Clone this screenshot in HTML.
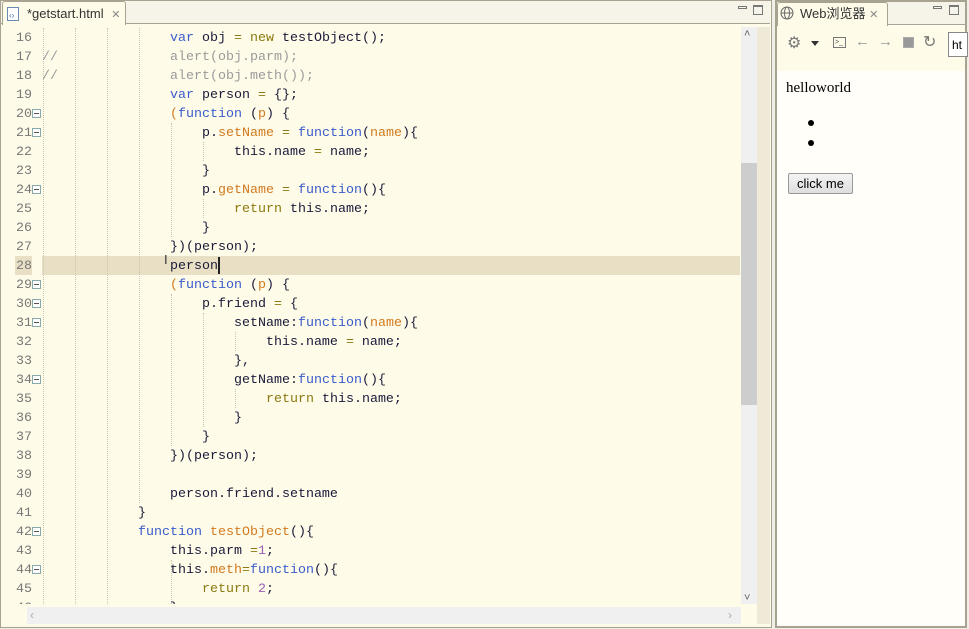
<!DOCTYPE html>
<html><head><meta charset="utf-8"><style>
*{margin:0;padding:0;box-sizing:border-box}
body{width:969px;height:629px;background:#f0efe6;position:relative;overflow:hidden;font-family:"Liberation Sans","Noto Sans CJK SC",sans-serif}
.abs{position:absolute}
#ed{left:0;top:0;width:772px;height:628px;border:1px solid #a8a390;background:#fefbe8}
#tabbar{left:1px;top:1px;width:769px;height:23px;background:#f6f4e8;border-bottom:1px solid #a8a390}
.tab{height:24px;background:#fefbe8;border:1px solid #a8a390;border-bottom:none;border-radius:3px 3px 0 0;font-size:13px;line-height:16px;color:#333;padding:4px 0 0 24px;white-space:nowrap}
.code{font-family:"Liberation Mono",monospace;font-size:13.33px;line-height:19px;white-space:pre;color:#1a1a3a}
.ln{color:#787878;font-family:"Liberation Mono",monospace;font-size:13.33px;line-height:19px;width:32px;text-align:right;left:0}
.k{color:#3a5ccc}.o{color:#8c7a10}.p{color:#d27a1e}.c{color:#9a9a9a}.n{color:#9c5fb5}
.fold{width:9px;height:9px;border:1px solid #8aa;background:#fff;}
.fold:after{content:"";position:absolute;left:1px;top:3px;width:5px;height:1px;background:#555}
.g{border-left:1px dotted #c8c4b0;width:0}
#br{left:775px;top:0;width:192px;height:628px;border:2px solid #a8a390;background:#fffef9}
</style></head><body>
<div id="ed" class="abs"></div>
<div id="tabbar" class="abs"></div>
<div class="abs tab" style="left:2px;top:1px;width:124px">*getstart.html <span style="color:#888;font-size:11px;margin-left:4px">✕</span></div>
<svg class="abs" style="left:7px;top:7px" width="13" height="14"><rect x="0.5" y="0.5" width="11" height="13" fill="#fff" stroke="#6a8ab0"/><text x="2" y="11" font-size="8" fill="#3a6aa0" font-family="Liberation Sans">‹›</text></svg>
<div class="abs" style="left:738px;top:6px;width:9px;height:3px;border:1px solid #777"></div>
<div class="abs" style="left:753px;top:5px;width:10px;height:10px;border:1px solid #777;border-top-width:2px"></div>

<div class="abs" style="left:42px;top:256px;width:698px;height:19px;background:#e8dfc4"></div>
<div class="abs" style="left:15px;top:256px;width:17px;height:19px;background:#e8dfc4"></div>

<div class="abs g" style="left:43px;top:28px;height:576px"></div>
<div class="abs g" style="left:75px;top:28px;height:576px"></div>
<div class="abs g" style="left:107px;top:28px;height:576px"></div>
<div class="abs g" style="left:139px;top:28px;height:475px"></div>
<div class="abs g" style="left:171px;top:123px;height:114px"></div>
<div class="abs g" style="left:171px;top:294px;height:152px"></div>
<div class="abs g" style="left:203px;top:142px;height:19px"></div>
<div class="abs g" style="left:203px;top:199px;height:19px"></div>
<div class="abs g" style="left:203px;top:313px;height:114px"></div>
<div class="abs g" style="left:235px;top:332px;height:19px"></div>
<div class="abs g" style="left:235px;top:389px;height:19px"></div>
<div class="abs g" style="left:171px;top:560px;height:44px"></div>

<div class="abs ln" style="top:29px;height:575px;overflow:hidden">16
17
18
19
20
21
22
23
24
25
26
27
28
29
30
31
32
33
34
35
36
37
38
39
40
41
42
43
44
45
46</div>
<div class="abs fold" style="left:32px;top:109px"></div>
<div class="abs fold" style="left:32px;top:128px"></div>
<div class="abs fold" style="left:32px;top:185px"></div>
<div class="abs fold" style="left:32px;top:280px"></div>
<div class="abs fold" style="left:32px;top:299px"></div>
<div class="abs fold" style="left:32px;top:318px"></div>
<div class="abs fold" style="left:32px;top:375px"></div>
<div class="abs fold" style="left:32px;top:527px"></div>
<div class="abs fold" style="left:32px;top:565px"></div>

<div class="abs code" style="left:42px;top:29px;width:698px;height:575px;overflow:hidden">                <span class="k">var</span> obj <span class="o">=</span> <span class="o">new</span> testObject();
<span class="c">//              alert(obj.parm);</span>
<span class="c">//              alert(obj.meth());</span>
                <span class="k">var</span> person <span class="o">=</span> {};
                <span class="p">(</span><span class="k">function</span> (<span class="p">p</span>) {
                    p.<span class="p">setName</span> <span class="o">=</span> <span class="k">function</span>(<span class="p">name</span>){
                        this.name <span class="o">=</span> name;
                    }
                    p.<span class="p">getName</span> <span class="o">=</span> <span class="k">function</span>(){
                        <span class="o">return</span> this.name;
                    }
                })(person);
                person
                <span class="p">(</span><span class="k">function</span> (<span class="p">p</span>) {
                    p.friend <span class="o">=</span> {
                        setName:<span class="k">function</span>(<span class="p">name</span>){
                            this.name <span class="o">=</span> name;
                        },
                        getName:<span class="k">function</span>(){
                            <span class="o">return</span> this.name;
                        }
                    }
                })(person);

                person.friend.setname
            }
            <span class="k">function</span> <span class="p">testObject</span>(){
                this.parm <span class="o">=</span><span class="n">1</span>;
                this.<span class="p">meth</span><span class="o">=</span><span class="k">function</span>(){
                    <span class="o">return</span> <span class="n">2</span>;
                }</div>
<div class="abs" style="left:218px;top:257px;width:2px;height:17px;background:#222"></div>
<div class="abs" style="left:164px;top:252px;font-size:13px;color:#333">I</div>

<div class="abs" style="left:741px;top:27px;width:16px;height:577px;background:#f0f0f0"></div>
<div class="abs" style="left:741px;top:163px;width:16px;height:242px;background:#cdcdcd"></div>
<div class="abs" style="left:744px;top:28px;font-size:11px;color:#666">˄</div>
<div class="abs" style="left:744px;top:592px;font-size:11px;color:#666">˅</div>
<div class="abs" style="left:757px;top:27px;width:13px;height:597px;background:#efe9d8"></div>
<div class="abs" style="left:27px;top:607px;width:714px;height:17px;background:#f0f0f0"></div>
<div class="abs" style="left:30px;top:608px;font-size:12px;color:#aaa">‹</div>
<div class="abs" style="left:728px;top:608px;font-size:12px;color:#aaa">›</div>

<div id="br" class="abs"></div>
<div class="abs" style="left:777px;top:2px;width:188px;height:23px;background:#f6f4e8;border-bottom:1px solid #a8a390"></div>
<div class="abs tab" style="left:777px;top:2px;width:111px;padding-left:22px;padding-top:3px">Web浏览器 <span style="color:#888;font-size:11px">✕</span></div>
<svg class="abs" style="left:780px;top:6px" width="14" height="14"><circle cx="7" cy="7" r="6" fill="none" stroke="#666"/><ellipse cx="7" cy="7" rx="2.5" ry="6" fill="none" stroke="#666"/><line x1="1" y1="7" x2="13" y2="7" stroke="#666"/></svg>
<div class="abs" style="left:933px;top:6px;width:9px;height:3px;border:1px solid #777"></div>
<div class="abs" style="left:949px;top:5px;width:10px;height:10px;border:1px solid #777;border-top-width:2px"></div>
<div class="abs" style="left:777px;top:26px;width:188px;height:45px;background:#fefbe8"></div>
<div class="abs" style="left:787px;top:33px;font-size:16px;color:#777">⚙</div>
<div class="abs" style="left:811px;top:41px;border:4px solid transparent;border-top:5px solid #333"></div>
<div class="abs" style="left:833px;top:37px;width:13px;height:11px;border:1px solid #777;font-size:7px;color:#555;line-height:9px;padding-left:1px">&gt;_</div>
<div class="abs" style="left:855px;top:33px;font-size:15px;color:#999">←</div>
<div class="abs" style="left:878px;top:33px;font-size:15px;color:#999">→</div>
<div class="abs" style="left:903px;top:37px;width:11px;height:11px;border:1px solid #aaa;background:#999"></div>
<div class="abs" style="left:923px;top:32px;font-size:16px;color:#777">↻</div>
<div class="abs" style="left:948px;top:32px;width:20px;height:25px;border:1px solid #888;background:#fff;font-size:12px;padding:5px 0 0 3px">ht</div>
<div class="abs" style="left:786px;top:80px;font-family:'Liberation Serif',serif;font-size:15px;color:#000">helloworld</div>
<div class="abs" style="left:808px;top:120px;width:6px;height:6px;border-radius:3px;background:#000"></div>
<div class="abs" style="left:808px;top:140px;width:6px;height:6px;border-radius:3px;background:#000"></div>
<div class="abs" style="left:788px;top:173px;width:65px;height:21px;border:1px solid #999;border-radius:2px;background:linear-gradient(#f4f4f4,#dedede);font-size:13px;text-align:center;line-height:19px;color:#000">click me</div>
</body></html>
